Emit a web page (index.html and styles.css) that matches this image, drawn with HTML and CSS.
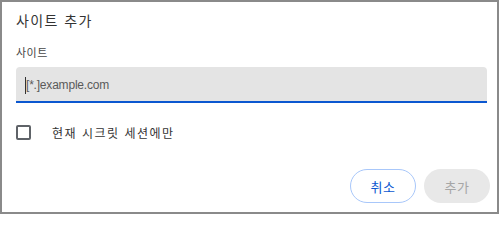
FILE: index.html
```html
<!DOCTYPE html>
<html lang="ko">
<head>
<meta charset="utf-8">
<link rel="stylesheet" href="styles.css">
</head>
<body>
<div class="dialog">
  <div class="title">사이트 추가</div>
  <div class="label">사이트</div>
  <div class="input">
    <span class="caret"></span><span class="placeholder">[*.]example.com</span>
  </div>
  <div class="check-row">
    <span class="checkbox"></span>
    <span class="check-label">현재 시크릿 세션에만</span>
  </div>
  <div class="actions">
    <button class="btn btn-cancel">취소</button>
    <button class="btn btn-add">추가</button>
  </div>
</div>
</body>
</html>
```
FILE: styles.css
```css
html, body {
  margin: 0;
  padding: 0;
  background: #ffffff;
}
body {
  font-family: "Noto Sans CJK KR", "Noto Sans", sans-serif;
}
.dialog {
  box-sizing: border-box;
  width: 499px;
  height: 214px;
  border: 2px solid #8a8a8a;
  padding: 8px 7px 0 14px;
  display: flex;
  flex-direction: column;
}
.title {
  font-size: 14px;
  line-height: 20px;
  letter-spacing: 1.4px;
  color: #333333;
}
.label {
  margin-top: 14px;
  font-size: 11px;
  line-height: 16px;
  letter-spacing: 0.5px;
  color: #474747;
}
.input {
  margin-top: 7px;
  box-sizing: border-box;
  height: 36px;
  width: 471px;
  background: #e4e4e4;
  border-radius: 4px 4px 0 0;
  border-bottom: 2px solid #0b57d0;
  display: flex;
  align-items: center;
  padding-left: 9px;
  padding-top: 2px;
}
.caret {
  display: block;
  width: 1px;
  height: 17px;
  background: #333333;
}
.placeholder {
  font-family: "Liberation Sans", Arial, sans-serif;
  font-size: 12px;
  letter-spacing: -0.2px;
  color: #5a5a5a;
}
.check-row {
  margin-top: 21px;
  display: flex;
  align-items: center;
  height: 16px;
}
.checkbox {
  box-sizing: border-box;
  width: 15px;
  height: 15px;
  border: 2px solid #5f6368;
  border-radius: 2px;
}
.check-label {
  margin-left: 21px;
  font-size: 12px;
  line-height: 16px;
  letter-spacing: 1.5px;
  color: #333333;
  position: relative;
  top: 1px;
}
.actions {
  margin-top: 29px;
  display: flex;
  justify-content: flex-end;
  gap: 8px;
}
.btn {
  box-sizing: border-box;
  height: 34px;
  width: 66px;
  border-radius: 17px;
  font-family: "Noto Sans CJK KR", "Noto Sans", sans-serif;
  font-size: 13px;
  letter-spacing: 0.5px;
  padding: 0;
}
.btn-cancel {
  background: #ffffff;
  border: 1px solid #a8c7fa;
  color: #0b57d0;
}
.btn-add {
  background: #e8e8e8;
  border: none;
  color: #a6a6a6;
}
```
